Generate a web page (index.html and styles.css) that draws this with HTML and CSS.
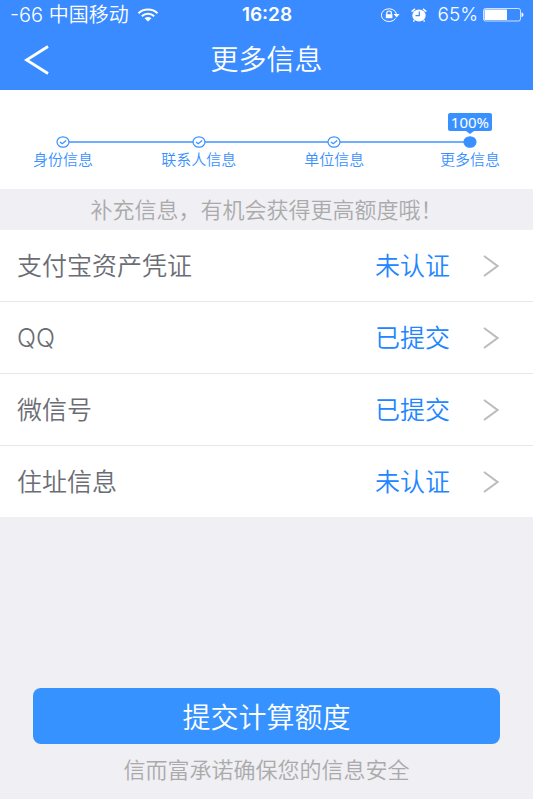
FILE: index.html
```html
<!DOCTYPE html>
<html lang="zh-CN">
<head>
<meta charset="utf-8">
<meta name="viewport" content="width=device-width, initial-scale=1">
<title>更多信息</title>
<link rel="stylesheet" href="styles.css">
</head>
<body>
<header class="top">
  <div class="status">
    <div class="carrier">
      <span>-66 中国移动</span>
      <svg class="wifi" width="22" height="14" viewBox="0 0 22 14" fill="none" stroke="currentColor" stroke-width="2">
        <path d="M1.500 5.200C6.500.2 15.500.2 20.500 5.200M4.800 8.200c3.500-3.400 8.900-3.400 12.400 0"/>
        <path d="M7.500 10.300c2-1.700 5-1.700 7 0L11 13.500z" fill="currentColor" stroke="none"/>
      </svg>
    </div>
    <time class="clock">16:28</time>
    <div class="indicators">
      <svg width="20" height="14" viewBox="0 0 20 14" fill="none" stroke="currentColor">
        <path d="M15.600 10.400A7.600 6.400 0 1 1 16.600 6.500"/>
        <path d="M13.600 6h6l-3 3.400z" fill="currentColor" stroke="none"/>
        <path d="M6.800 6.500V4.900a2.300 1.900 0 0 1 4.600 0v1.600" stroke-width="1.200"/>
        <path d="M5.800 6.200h6.600v4H5.800z" fill="currentColor" stroke="none"/>
      </svg>
      <svg class="alarm" width="16" height="14" viewBox="0 0 16 14">
        <ellipse cx="8" cy="7.400" rx="6.700" ry="6" fill="currentColor"/>
        <path d="M.6 3.600 4 .9M15.400 3.600 12 .9M3.400 12.200l-1 1.300M12.600 12.200l1 1.300" stroke="currentColor" stroke-width="1.400"/>
        <path d="M8.300 3.500V7.700H4.500" fill="none" stroke="#3a8bff" stroke-width="1.200"/>
      </svg>
      <span class="percent">65%</span>
      <svg width="41" height="14" viewBox="0 0 41 14">
        <rect x=".5" y=".5" width="37" height="12.500" rx="2" fill="none" stroke="currentColor" opacity=".75"/>
        <rect x="1.500" y="1.500" width="22.500" height="10.500" fill="currentColor"/>
        <path d="M38.500 4.500c2.600.4 2.600 4.200 0 4.600z" fill="currentColor"/>
      </svg>
    </div>
  </div>
  <nav class="bar">
    <a class="back" href="#" aria-label="返回">
      <svg width="26" height="30" viewBox="0 0 26 30" fill="none" stroke="currentColor" stroke-width="2.800"><path d="M24 1.500 2.500 15 24 28.500"/></svg>
    </a>
    <h1>更多信息</h1>
  </nav>
</header>

<main>
  <ol class="steps">
    <li class="step">
      <svg class="dot" width="14" height="12" viewBox="0 0 14 12"><ellipse cx="7" cy="6" rx="6" ry="5.200"/><path d="m4 6 2.200 1.800L10.200 4.500"/></svg>
      <span>身份信息</span>
    </li>
    <li class="step">
      <svg class="dot" width="14" height="12" viewBox="0 0 14 12"><ellipse cx="7" cy="6" rx="6" ry="5.200"/><path d="m4 6 2.200 1.800L10.200 4.500"/></svg>
      <span>联系人信息</span>
    </li>
    <li class="step">
      <svg class="dot" width="14" height="12" viewBox="0 0 14 12"><ellipse cx="7" cy="6" rx="6" ry="5.200"/><path d="m4 6 2.200 1.800L10.200 4.500"/></svg>
      <span>单位信息</span>
    </li>
    <li class="step" aria-current="step">
      <span class="bubble">100%</span>
      <svg class="dot current" width="14" height="12" viewBox="0 0 14 12"><ellipse cx="7" cy="6" rx="6" ry="5.200"/></svg>
      <span>更多信息</span>
    </li>
  </ol>

  <p class="hint">补充信息，有机会获得更高额度哦！</p>

  <ul class="items">
    <li><a class="item" href="#"><span class="name">支付宝资产凭证</span><span class="state">未认证</span><svg class="chevron" width="16" height="22" viewBox="0 0 16 22"><path d="M1 1 14.500 11 1 21"/></svg></a></li>
    <li><a class="item" href="#"><span class="name">QQ</span><span class="state">已提交</span><svg class="chevron" width="16" height="22" viewBox="0 0 16 22"><path d="M1 1 14.500 11 1 21"/></svg></a></li>
    <li><a class="item" href="#"><span class="name">微信号</span><span class="state">已提交</span><svg class="chevron" width="16" height="22" viewBox="0 0 16 22"><path d="M1 1 14.500 11 1 21"/></svg></a></li>
    <li><a class="item" href="#"><span class="name">住址信息</span><span class="state">未认证</span><svg class="chevron" width="16" height="22" viewBox="0 0 16 22"><path d="M1 1 14.500 11 1 21"/></svg></a></li>
  </ul>
</main>

<footer class="actions">
  <button class="submit" type="button">提交计算额度</button>
  <p class="promise">信而富承诺确保您的信息安全</p>
</footer>
</body>
</html>
```
FILE: styles.css
```css
* { box-sizing: border-box; }

body {
  margin: 0;
  min-height: 100vh;
  display: flex;
  flex-direction: column;
  background: #efeff4;
  color: #6b6d75;
  font-family: Inter, "Noto Sans CJK SC", sans-serif;
  font-weight: 350;
}

svg { display: block; flex: none; }
a { color: inherit; text-decoration: none; }
h1, p, ol, ul { margin: 0; padding: 0; font-weight: inherit; }
ol, ul { list-style: none; }

.top { background: #3a8bff; color: #fff; }

.status {
  display: grid;
  grid-template-columns: 1fr auto 1fr;
  align-items: center;
  height: 30px;
  padding: 0 9px 0 10px;
  font-size: 19px;
  line-height: 30px;
}
.carrier, .indicators { display: flex; align-items: center; white-space: nowrap; }
.carrier { gap: 8px; font-size: 20px; }
.clock { font-weight: 600; }
.indicators { justify-content: flex-end; }
.alarm { margin: 0 10px 0 11px; }
.percent { margin-right: 5px; }

.bar {
  display: grid;
  grid-template-columns: 64px 1fr 64px;
  align-items: center;
  height: 60px;
}
.back { padding-left: 24px; }
.bar h1 { font-size: 28px; line-height: 40px; text-align: center; }

.steps {
  position: relative;
  display: flex;
  justify-content: space-between;
  padding: 46px 18px 17px;
  background: #fff;
  color: #3991ff;
}
.steps::before {
  content: "";
  position: absolute;
  top: 51px;
  left: 63px;
  right: 63px;
  height: 2px;
  background: #6eafff;
}
.step {
  position: relative;
  display: flex;
  flex-direction: column;
  align-items: center;
  width: 90px;
  font-size: 15px;
  line-height: 24px;
  white-space: nowrap;
}
.dot { fill: #fff; stroke: currentColor; stroke-width: 1.2; }
.dot path { fill: none; }
.dot.current { fill: currentColor; }
.bubble {
  position: absolute;
  bottom: 41px;
  padding: 0 3px;
  border-radius: 2px;
  background: #3991ff;
  color: #fff;
  font: 400 15px/18px "Noto Sans", sans-serif;
}
.bubble::after {
  content: "";
  position: absolute;
  top: 100%;
  left: 50%;
  margin-left: -4px;
  border: 4px solid transparent;
  border-top: 3px solid #3991ff;
  border-bottom: 0;
}

.hint {
  padding: 5px 0 4px;
  color: #aaa;
  font-size: 22px;
  line-height: 32px;
  text-align: center;
  white-space: nowrap;
}

.items { background: #fff; }
.items li + li { border-top: 1px solid #e6e6eb; }
.item {
  display: flex;
  align-items: center;
  height: 71px;
  padding: 0 34px 0 17px;
  font-size: 25px;
  line-height: 36px;
}
.state { margin-left: auto; margin-right: 33px; color: #2186ff; }
.chevron { fill: none; stroke: #bcbcbf; stroke-width: 2; }

.actions { margin-top: auto; padding: 0 33px 13px; text-align: center; }
.submit {
  display: block;
  width: 100%;
  height: 56px;
  padding: 0;
  border: 0;
  border-radius: 8px;
  background: #3692ff;
  color: #fff;
  font: inherit;
  font-size: 28px;
}
.promise { margin-top: 10px; color: #aaa; font-size: 22px; line-height: 32px; }
```
